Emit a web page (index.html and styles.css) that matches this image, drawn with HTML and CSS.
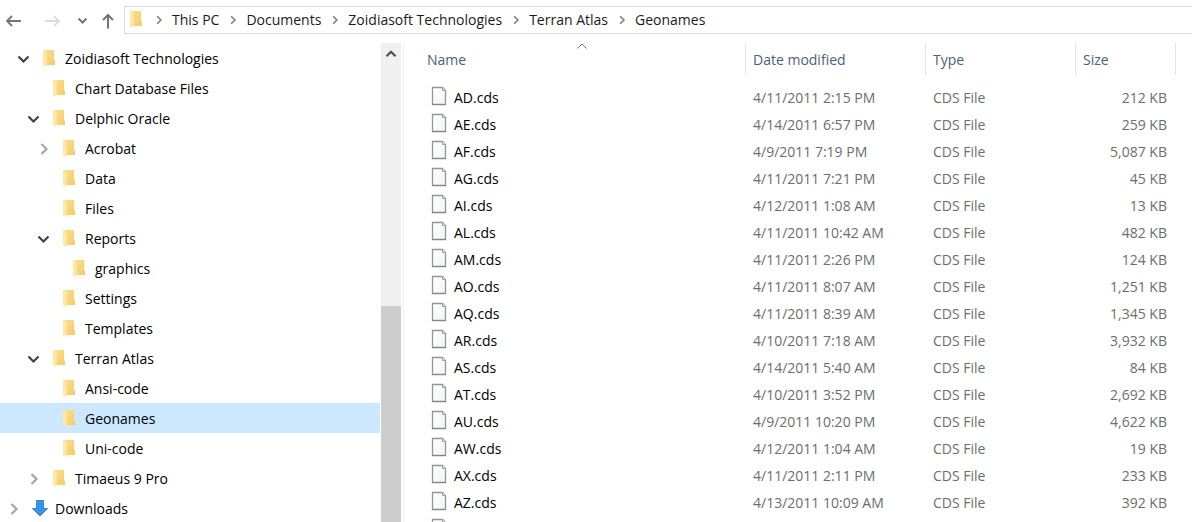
FILE: index.html
```html
<!DOCTYPE html>
<html lang="en">
<head>
<meta charset="utf-8">
<title>Geonames</title>
<link rel="stylesheet" href="styles.css">
</head>
<body>
<svg class="sprite" aria-hidden="true">
  <defs>
    <linearGradient id="gold" x1="0" y1="0" x2="1" y2="1"><stop offset="0" stop-color="#fbdf8c"/><stop offset="1" stop-color="#f3cc68"/></linearGradient>
    <linearGradient id="paper" x1="0" y1="0" x2="1" y2="1"><stop offset="0" stop-color="#ffffff"/><stop offset="1" stop-color="#f1f3f4"/></linearGradient>
  </defs>
  <symbol id="folder" viewBox="0 0 16 18">
    <path d="M2 0h10v10l1 1v4H2z" fill="url(#gold)"/>
    <path d="M1 0l4 2v12l-2 3-2-2z" fill="#ffe8a6"/>
    <path d="M5 2v12" stroke="#f5d98c" stroke-width=".6"/>
  </symbol>
  <symbol id="file" viewBox="0 0 16 20">
    <path d="M1.500 1.500h10l3 3v14h-13z" fill="url(#paper)" stroke="#959595" stroke-width="1.300"/>
    <path d="M11.500 1.500v3h3" fill="#e2e2e2" stroke="#a0a0a0"/>
    <path d="M1 18.500h14" stroke="#858585"/>
  </symbol>
  <symbol id="right" viewBox="0 0 16 16"><path d="M5.500 3l5 5-5 5" fill="none" stroke="currentColor" stroke-width="2.200"/></symbol>
  <symbol id="down" viewBox="0 0 16 16"><path d="M2.500 5.500l5 5 5-5" fill="none" stroke="currentColor" stroke-width="2.200"/></symbol>
</svg>

<header class="toolbar">
  <nav class="history" aria-label="History">
    <button class="nav-button" aria-label="Back"><svg viewBox="0 0 16 16"><path d="M15 8H1.500M6 3L1 8l5 5" fill="none" stroke="currentColor" stroke-width="1.800"/></svg></button>
    <button class="nav-button forward" aria-label="Forward" disabled><svg viewBox="0 0 16 16"><path d="M1 8H15M10 3l5 5-5 5" fill="none" stroke="currentColor" stroke-width="1.800"/></svg></button>
    <button class="nav-button recent" aria-label="Recent locations"><svg viewBox="0 0 16 16"><path d="M4.500 5.500l4 4 4-4" fill="none" stroke="currentColor" stroke-width="2"/></svg></button>
    <button class="nav-button" aria-label="Up"><svg viewBox="0 0 16 16"><path d="M8 15.500V2M3 7l5-5 5 5" fill="none" stroke="currentColor" stroke-width="2"/></svg></button>
  </nav>
  <nav class="address" aria-label="Address">
    <svg class="folder"><use href="#folder"/></svg>
    <svg class="crumb-arrow"><use href="#right"/></svg><a href="#">This PC</a>
    <svg class="crumb-arrow"><use href="#right"/></svg><a href="#">Documents</a>
    <svg class="crumb-arrow"><use href="#right"/></svg><a href="#">Zoidiasoft Technologies</a>
    <svg class="crumb-arrow"><use href="#right"/></svg><a href="#">Terran Atlas</a>
    <svg class="crumb-arrow"><use href="#right"/></svg><a href="#">Geonames</a>
  </nav>
</header>

<main class="panes">
  <ul class="tree">
    <li class="node level-1"><button class="toggle open" aria-label="Collapse Zoidiasoft Technologies"><svg><use href="#down"/></svg></button><a href="#"><svg class="folder"><use href="#folder"/></svg>Zoidiasoft Technologies</a></li>
    <li class="node level-2"><span class="toggle"></span><a href="#"><svg class="folder"><use href="#folder"/></svg>Chart Database Files</a></li>
    <li class="node level-2"><button class="toggle open" aria-label="Collapse Delphic Oracle"><svg><use href="#down"/></svg></button><a href="#"><svg class="folder"><use href="#folder"/></svg>Delphic Oracle</a></li>
    <li class="node level-3"><button class="toggle" aria-label="Expand Acrobat"><svg><use href="#right"/></svg></button><a href="#"><svg class="folder"><use href="#folder"/></svg>Acrobat</a></li>
    <li class="node level-3"><span class="toggle"></span><a href="#"><svg class="folder"><use href="#folder"/></svg>Data</a></li>
    <li class="node level-3"><span class="toggle"></span><a href="#"><svg class="folder"><use href="#folder"/></svg>Files</a></li>
    <li class="node level-3"><button class="toggle open" aria-label="Collapse Reports"><svg><use href="#down"/></svg></button><a href="#"><svg class="folder"><use href="#folder"/></svg>Reports</a></li>
    <li class="node level-4"><span class="toggle"></span><a href="#"><svg class="folder"><use href="#folder"/></svg>graphics</a></li>
    <li class="node level-3"><span class="toggle"></span><a href="#"><svg class="folder"><use href="#folder"/></svg>Settings</a></li>
    <li class="node level-3"><span class="toggle"></span><a href="#"><svg class="folder"><use href="#folder"/></svg>Templates</a></li>
    <li class="node level-2"><button class="toggle open" aria-label="Collapse Terran Atlas"><svg><use href="#down"/></svg></button><a href="#"><svg class="folder"><use href="#folder"/></svg>Terran Atlas</a></li>
    <li class="node level-3"><span class="toggle"></span><a href="#"><svg class="folder"><use href="#folder"/></svg>Ansi-code</a></li>
    <li class="node level-3 selected"><span class="toggle"></span><a href="#" aria-current="true"><svg class="folder"><use href="#folder"/></svg>Geonames</a></li>
    <li class="node level-3"><span class="toggle"></span><a href="#"><svg class="folder"><use href="#folder"/></svg>Uni-code</a></li>
    <li class="node level-2"><button class="toggle" aria-label="Expand Timaeus 9 Pro"><svg><use href="#right"/></svg></button><a href="#"><svg class="folder"><use href="#folder"/></svg>Timaeus 9 Pro</a></li>
    <li class="node"><button class="toggle" aria-label="Expand Downloads"><svg><use href="#right"/></svg></button><a href="#"><svg class="folder" viewBox="0 0 16 18"><path d="M4.500 .5h7v8h4L8 16 .5 8.500h4z" fill="#3696e6" stroke="#2f86d2"/></svg>Downloads</a></li>
  </ul>
  <div class="scrollbar">
    <button class="scroll-up" aria-label="Scroll up"><svg viewBox="0 0 16 16"><path d="M4 10l4-4 4 4" fill="none" stroke="currentColor" stroke-width="2"/></svg></button>
    <div class="thumb"></div>
  </div>
  <section class="files">
    <table>
      <colgroup><col><col class="col-date"><col class="col-type"><col class="col-size"></colgroup>
      <thead>
        <tr><th scope="col" class="name">Name<svg class="sort" viewBox="0 0 10 6"><path d="M.5 5.500L5 1l4.500 4.500" fill="none" stroke="#777"/></svg></th><th scope="col">Date modified</th><th scope="col">Type</th><th scope="col">Size</th></tr>
      </thead>
      <tbody>
        <tr><td class="name"><svg><use href="#file"/></svg>AD.cds</td><td>4/11/2011 2:15 PM</td><td>CDS File</td><td>212 KB</td></tr>
        <tr><td class="name"><svg><use href="#file"/></svg>AE.cds</td><td>4/14/2011 6:57 PM</td><td>CDS File</td><td>259 KB</td></tr>
        <tr><td class="name"><svg><use href="#file"/></svg>AF.cds</td><td>4/9/2011 7:19 PM</td><td>CDS File</td><td>5,087 KB</td></tr>
        <tr><td class="name"><svg><use href="#file"/></svg>AG.cds</td><td>4/11/2011 7:21 PM</td><td>CDS File</td><td>45 KB</td></tr>
        <tr><td class="name"><svg><use href="#file"/></svg>AI.cds</td><td>4/12/2011 1:08 AM</td><td>CDS File</td><td>13 KB</td></tr>
        <tr><td class="name"><svg><use href="#file"/></svg>AL.cds</td><td>4/11/2011 10:42 AM</td><td>CDS File</td><td>482 KB</td></tr>
        <tr><td class="name"><svg><use href="#file"/></svg>AM.cds</td><td>4/11/2011 2:26 PM</td><td>CDS File</td><td>124 KB</td></tr>
        <tr><td class="name"><svg><use href="#file"/></svg>AO.cds</td><td>4/11/2011 8:07 AM</td><td>CDS File</td><td>1,251 KB</td></tr>
        <tr><td class="name"><svg><use href="#file"/></svg>AQ.cds</td><td>4/11/2011 8:39 AM</td><td>CDS File</td><td>1,345 KB</td></tr>
        <tr><td class="name"><svg><use href="#file"/></svg>AR.cds</td><td>4/10/2011 7:18 AM</td><td>CDS File</td><td>3,932 KB</td></tr>
        <tr><td class="name"><svg><use href="#file"/></svg>AS.cds</td><td>4/14/2011 5:40 AM</td><td>CDS File</td><td>84 KB</td></tr>
        <tr><td class="name"><svg><use href="#file"/></svg>AT.cds</td><td>4/10/2011 3:52 PM</td><td>CDS File</td><td>2,692 KB</td></tr>
        <tr><td class="name"><svg><use href="#file"/></svg>AU.cds</td><td>4/9/2011 10:20 PM</td><td>CDS File</td><td>4,622 KB</td></tr>
        <tr><td class="name"><svg><use href="#file"/></svg>AW.cds</td><td>4/12/2011 1:04 AM</td><td>CDS File</td><td>19 KB</td></tr>
        <tr><td class="name"><svg><use href="#file"/></svg>AX.cds</td><td>4/11/2011 2:11 PM</td><td>CDS File</td><td>233 KB</td></tr>
        <tr><td class="name"><svg><use href="#file"/></svg>AZ.cds</td><td>4/13/2011 10:09 AM</td><td>CDS File</td><td>392 KB</td></tr>
        <tr><td class="name"><svg><use href="#file"/></svg></td><td></td><td></td><td></td></tr>
      </tbody>
    </table>
  </section>
</main>
</body>
</html>
```
FILE: styles.css
```css
* { box-sizing: border-box; }

body {
  margin: 0;
  height: 100vh;
  display: flex;
  flex-direction: column;
  overflow: hidden;
  background: #fff;
  color: #000;
  font: 14px/20px "Open Sans", "Noto Sans", sans-serif;
}

a { color: inherit; text-decoration: none; white-space: nowrap; }
button { border: 0; padding: 0; background: none; color: inherit; font: inherit; }
svg { display: block; flex: none; }
.sprite { position: absolute; width: 0; height: 0; }

.toolbar { display: flex; flex: none; padding-top: 6px; }
.history { display: flex; align-items: center; gap: 22px; width: 124px; padding: 2px 0 0 6px; color: #757575; }
.nav-button, .nav-button svg { width: 16px; height: 16px; }
.forward { color: #dcdcdc; }
.recent { margin: 0 -12px 0 -8px; }

.address {
  display: flex;
  flex: 1;
  align-items: center;
  height: 28px;
  padding-left: 4px;
  border: 1px solid #d9d9d9;
  border-right: 0;
  color: #1a1a1a;
}
.folder { width: 16px; height: 18px; }
.crumb-arrow { width: 12px; height: 12px; margin: 0 7px 0 8px; color: #808080; }

.panes { display: flex; flex: 1; min-height: 0; padding-top: 9px; }

.tree { flex: none; width: 380px; margin: 0; padding: 0; list-style: none; overflow: hidden; }
.node { display: flex; align-items: center; gap: 10px; height: 30px; padding: 2px 0 0 6px; }
.node a { display: flex; align-items: center; gap: 7px; }
.level-1 { padding-left: 16px; }
.level-2 { padding-left: 26px; }
.level-3 { padding-left: 36px; }
.level-4 { padding-left: 46px; }
.selected { background: #cce8ff; }
.toggle, .toggle svg { width: 16px; height: 16px; }
.toggle { color: #a6a6a6; }
.toggle.open { color: #404040; }

.scrollbar { display: flex; flex: none; flex-direction: column; justify-content: space-between; width: 20px; margin: 0 2px 0 1px; background: #f0f0f0; }
.scroll-up { display: grid; place-items: center; height: 21px; color: #505050; }
.scroll-up svg { width: 18px; height: 18px; }
.thumb { height: 45%; background: #cdcdcd; }

.files { flex: 1; min-width: 0; padding-right: 16px; border-left: 1px solid #f0f0f0; overflow: hidden; }
table { width: 100%; table-layout: fixed; border-collapse: separate; border-spacing: 0; }
.col-date { width: 180px; }
.col-type { width: 150px; }
.col-size { width: 100px; }

th { position: relative; height: 32px; padding: 2px 7px 0; border-right: 1px solid #e5e5e5; color: #4c607a; font-weight: 400; text-align: left; }
th.name { padding-left: 23px; }
.sort { position: absolute; top: 0; left: calc(50% + 2px); width: 10px; height: 6px; }

tbody::before { content: ""; display: block; height: 9px; }
td { height: 27px; padding: 0 7px; color: #6d6d6d; white-space: nowrap; }
td:last-child { padding-right: 9px; text-align: right; }
td.name { display: flex; align-items: center; gap: 7px; padding-left: 27px; color: #000; }
td.name svg { width: 16px; height: 20px; margin-bottom: 4px; }
```
